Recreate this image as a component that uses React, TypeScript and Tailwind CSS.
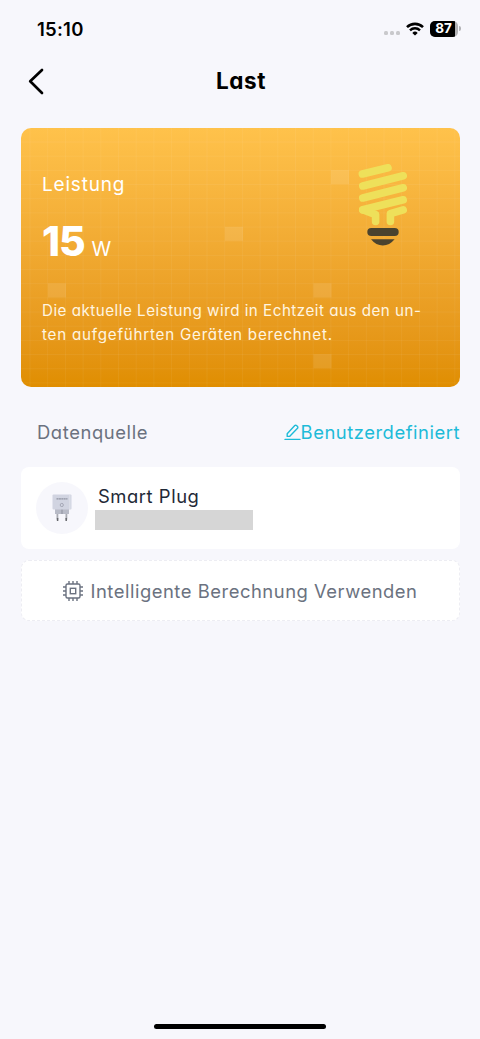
const gridColumns = Array.from({ length: 25 }, (_, i) => 9 + i * 17.7);
const gridRows = Array.from({ length: 18 }, (_, i) => 14 + i * 14.17);

const gridTiles = [
  { x: 310, y: 42.1 },
  { x: 204, y: 98.8 },
  { x: 27, y: 155.4 },
  { x: 292.5, y: 155.4 },
  { x: 292.5, y: 226.2 },
];

function StatusBar() {
  return (
    <div className="flex h-[57px] items-center justify-between pl-[37px] pr-[19px]">
      <span className="text-[18.5px] font-semibold leading-6 tracking-[0.25px] text-black">
        15:10
      </span>
      <div className="flex items-center">
        <div className="mr-[6px] mt-[9px] flex gap-[2px]">
          <span className="h-1 w-1 rounded-[1.5px] bg-[#c9c9cc]" />
          <span className="h-1 w-1 rounded-[1.5px] bg-[#c9c9cc]" />
          <span className="h-1 w-1 rounded-[1.5px] bg-[#c9c9cc]" />
        </div>
        <svg width="18" height="14" viewBox="0 0 18 14" fill="none" stroke="#000">
          <path d="M1 5.1a11.6 11.6 0 0 1 16 0" strokeWidth="2.6" />
          <path d="M4 8.3a7.2 7.2 0 0 1 10 0" strokeWidth="2.4" />
          <path d="M9 13.6 6.3 10.9a3.9 3.9 0 0 1 5.4 0Z" fill="#000" stroke="none" />
        </svg>
        <div className="ml-[6px] flex h-[16px] w-[28px] items-center overflow-hidden rounded-[5px] bg-[#b2b2b5]">
          <span className="flex h-full w-[25px] items-center justify-center bg-black pl-[2px] text-[13.5px] font-bold leading-none text-white">
            87
          </span>
        </div>
        <span className="ml-px h-[5px] w-[2px] rounded-r-full bg-[#b2b2b5]" />
      </div>
    </div>
  );
}

function Header() {
  return (
    <header className="grid h-12 grid-cols-[1fr_auto_1fr] items-center">
      <button type="button" aria-label="Zurück" className="pl-[27px]">
        <svg
          width="18"
          height="28"
          viewBox="0 0 18 28"
          fill="none"
          stroke="#000"
          strokeWidth="2.7"
          strokeLinecap="round"
          strokeLinejoin="round"
        >
          <path d="M15 3 3.2 14.3 15 26" />
        </svg>
      </button>
      <h1 className="-mt-px pl-[2px] text-[22.5px] font-bold leading-6 tracking-[0.6px] text-black">
        Last
      </h1>
      <div />
    </header>
  );
}

function CardGrid() {
  return (
    <svg className="absolute inset-0 h-full w-full" viewBox="0 0 439 259">
      <g stroke="#fff" strokeOpacity="0.055" strokeWidth="1">
        {gridColumns.map((x) => (
          <path key={x} d={`M${x} 0V259`} />
        ))}
        {gridRows.map((y) => (
          <path key={y} d={`M0 ${y}H439`} />
        ))}
      </g>
      {gridTiles.map((tile) => (
        <rect
          key={`${tile.x}-${tile.y}`}
          x={tile.x}
          y={tile.y}
          width="18"
          height="14"
          fill="#fff"
          fillOpacity="0.1"
        />
      ))}
    </svg>
  );
}

function BulbIcon() {
  return (
    <svg
      width="50"
      height="83"
      viewBox="0 0 50 83"
      fill="none"
      stroke="#eee05a"
      strokeWidth="7.6"
      strokeLinecap="round"
      strokeLinejoin="round"
    >
      <path d="M4.4 10 30 3.8" />
      <path d="M4.8 22 45.2 11.8" />
      <path d="M4.8 34 45.2 23.8" />
      <path d="M4.8 45.8 45.2 35.8" />
      <path d="M4.8 45.8 17.6 50.6V57.4" />
      <path d="M45.2 45.8 32.4 49.6V57.4" />
      <rect x="9.3" y="64" width="31.4" height="8" rx="4" fill="#4a432e" stroke="none" />
      <path d="M13 75.3H36.6Q31.6 81.5 24.8 81.5T13 75.3Z" fill="#4a432e" stroke="none" />
    </svg>
  );
}

function PowerCard() {
  return (
    <section className="relative h-[259px] overflow-hidden rounded-[10px] bg-linear-to-b from-[#ffc24b] to-[#e08e00]">
      <CardGrid />
      <div className="relative flex h-[138px] justify-between pl-[21px] pr-[52px] pt-[36px]">
        <div className="pt-[9px] text-white">
          <p className="text-[19px] font-[380] leading-6 tracking-[0.8px]">Leistung</p>
          <p className="mt-[20px] flex items-baseline leading-[48px]">
            <span className="text-[41px] font-extrabold tracking-[-1.2px]">15</span>
            <span className="ml-[7px] text-[20px]">W</span>
          </p>
        </div>
        <BulbIcon />
      </div>
      <p className="relative mt-[33px] whitespace-nowrap pl-[21px] text-[15.2px] font-[380] leading-6 tracking-[0.49px] text-[#fff5e0]">
        Die aktuelle Leistung wird in Echtzeit aus den un-
        <br />
        <span className="tracking-[0.76px]">ten aufgeführten Geräten berechnet.</span>
      </p>
    </section>
  );
}

function EditIcon() {
  return (
    <svg
      width="17"
      height="17"
      viewBox="0 0 17 17"
      fill="none"
      stroke="#1dbbd8"
      strokeWidth="1.4"
      strokeLinecap="round"
      strokeLinejoin="round"
    >
      <path d="M3.2 12.4V9.7L10.8 1.6a1.2 1.2 0 0 1 1.7 0l1 1a1.2 1.2 0 0 1 0 1.7L5.8 12.3Z" />
      <path d="M1 15.4H16" />
    </svg>
  );
}

function PlugIcon() {
  return (
    <svg width="22" height="30" viewBox="0 0 22 30" fill="none">
      <path d="M6.4 20v6.5M15.4 20v6.5" stroke="#a9abb2" strokeWidth="1.8" />
      <path d="M6.6 25v3M15.2 25v3" stroke="#66676c" strokeWidth="1.5" />
      <path d="M4 15h14v6H4Z" fill="#b8bbc7" />
      <path d="M11 15v6" stroke="#8e919e" />
      <rect x="1.5" y="1.5" width="19" height="15" rx="1" fill="#d1d4e1" />
      <path d="M18.8 2v14" stroke="#e1e3ec" />
      <path d="M5.5 5.9h11" stroke="#8f92a1" strokeWidth="1.2" strokeDasharray="2 .4" />
      <circle cx="10.8" cy="12" r="1.6" stroke="#9a9dac" strokeWidth="0.8" />
    </svg>
  );
}

function ChipIcon() {
  return (
    <svg width="20" height="20" viewBox="0 0 20 20" fill="none" stroke="#6b7280" strokeWidth="1.4">
      <rect x="3" y="3" width="14" height="14" rx="1.5" />
      <rect x="7.3" y="7.3" width="5.4" height="5.4" />
      <path d="M6 0v3M10 0v3M14 0v3M6 17v3M10 17v3M14 17v3" />
      <path d="M0 6h3M0 10h3M0 14h3M17 6h3M17 10h3M17 14h3" />
    </svg>
  );
}

export default function App() {
  return (
    <div className="flex h-[1039px] w-[480px] flex-col bg-[#f7f7fc] font-['Inter',sans-serif] [font-feature-settings:'cv11']">
      <StatusBar />
      <Header />
      <main className="flex-1 pl-[21px] pr-[20px] pt-[22.5px]">
        <PowerCard />
        <div className="mt-[33.5px] flex items-center justify-between pl-4">
          <h2 className="text-[18.4px] font-[380] leading-6 tracking-[0.6px] text-[#6b7280]">
            Datenquelle
          </h2>
          <button
            type="button"
            className="-mr-px flex items-center whitespace-nowrap pr-px text-[18.4px] font-[380] leading-6 tracking-[0.54px] text-[#1dbbd8]"
          >
            <EditIcon />
            Benutzerdefiniert
          </button>
        </div>
        <div className="mt-[23px] flex h-[82px] items-center rounded-lg bg-white pl-[15px]">
          <div className="flex h-[52px] w-[52px] items-center justify-center rounded-full bg-[#f7f7fc]">
            <PlugIcon />
          </div>
          <div className="ml-[7px] pb-[2px]">
            <p className="pl-[3px] text-[18.4px] font-[380] leading-6 tracking-[0.55px] text-[#1f2937]">
              Smart Plug
            </p>
            <div className="mt-[2px] h-5 w-[158px] bg-[#d6d6d6]" />
          </div>
        </div>
        <button
          type="button"
          className="mt-[11px] flex h-[61px] w-full items-center justify-center whitespace-nowrap rounded-lg border-[1.5px] border-dashed border-[#ededf3] bg-white text-[18.4px] font-[380] leading-6 tracking-[0.53px] text-[#6b7280]"
        >
          <ChipIcon />
          <span className="ml-[7px]">Intelligente Berechnung Verwenden</span>
        </button>
      </main>
      <div className="mx-auto mb-[10px] h-[5px] w-[172px] rounded-full bg-black" />
    </div>
  );
}
